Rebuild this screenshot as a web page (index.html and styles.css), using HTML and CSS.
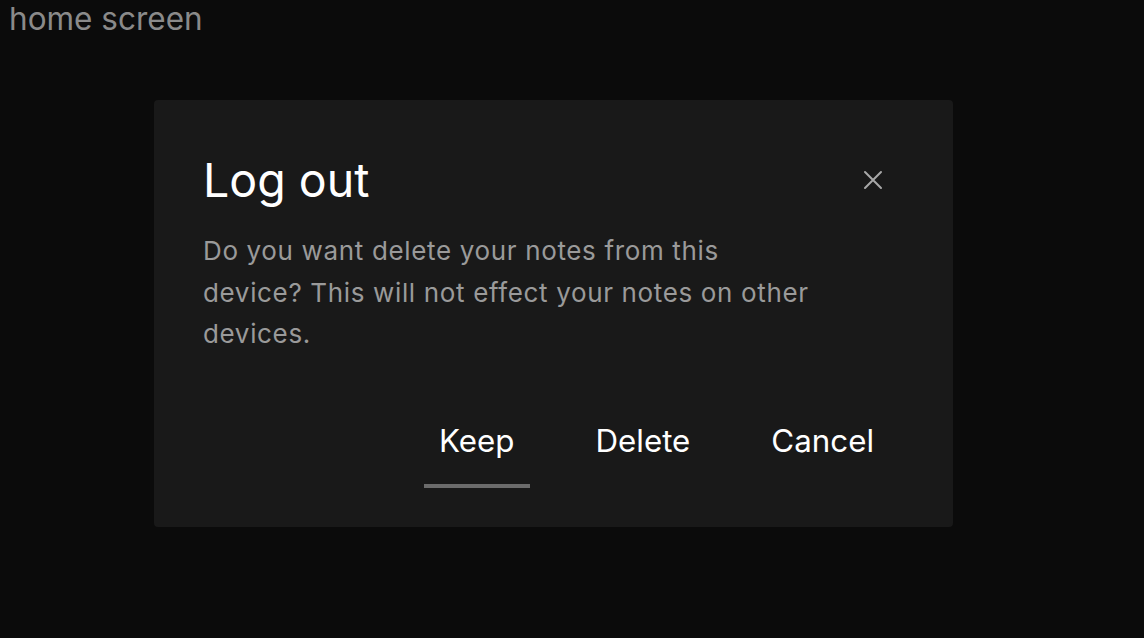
FILE: index.html
```html
<!DOCTYPE html>
<html>
<head>
<meta charset="utf-8">
<link rel="stylesheet" href="styles.css">
</head>
<body>
<div class="home">home screen</div>
<div class="overlay">
  <div class="dialog">
    <div class="header">
      <h1 class="title">Log out</h1>
      <button class="close" aria-label="Close">
        <svg width="20" height="20" viewBox="0 0 20 20"><path d="M2 2 L18 18 M18 2 L2 18" stroke="#a8a8a8" stroke-width="2" stroke-linecap="round" fill="none"/></svg>
      </button>
    </div>
    <p class="message">Do you want delete your notes from this device? This will not effect your notes on other devices.</p>
    <div class="actions">
      <button class="action active">Keep</button>
      <button class="action">Delete</button>
      <button class="action">Cancel</button>
    </div>
  </div>
</div>
</body>
</html>
```
FILE: styles.css
```css
html, body {
  margin: 0;
  padding: 0;
  background: #0b0b0b;
  height: 100%;
}
body {
  font-family: Inter, "Noto Sans", sans-serif;
  width: 1144px;
  height: 638px;
  overflow: hidden;
}
.home {
  color: #8a8a8a;
  font-size: 31.5px;
  line-height: 38px;
  padding-left: 9px;
}
.overlay {
  display: flex;
  padding-left: 154px;
  padding-top: 62px;
}
.dialog {
  width: 799px;
  height: 427px;
  box-sizing: border-box;
  background: #191919;
  border-radius: 4px;
  padding: 52px 70px 0 49px;
  display: flex;
  flex-direction: column;
}
.header {
  display: flex;
  justify-content: space-between;
  align-items: center;
}
.title {
  margin: 0;
  color: #ffffff;
  font-weight: 400;
  font-size: 46.5px;
  line-height: 56px;
}
.close {
  background: none;
  border: 0;
  padding: 0;
  width: 20px;
  height: 20px;
  display: flex;
}
.message {
  margin: 22px 0 0;
  max-width: 612px;
  color: #9a9a9a;
  font-size: 26px;
  letter-spacing: 0.65px;
  line-height: 41.5px;
}
.actions {
  display: flex;
  justify-content: flex-end;
  gap: 51px;
  margin-top: 58px;
  margin-right: -6px;
}
.action {
  background: none;
  border: 0;
  color: #ffffff;
  font-family: Inter, "Noto Sans", sans-serif;
  font-size: 31.3px;
  line-height: 40px;
  padding: 8px 15px 23px;
  border-bottom: 4px solid transparent;
}
.action.active {
  border-bottom-color: #6b6b6b;
}
```
